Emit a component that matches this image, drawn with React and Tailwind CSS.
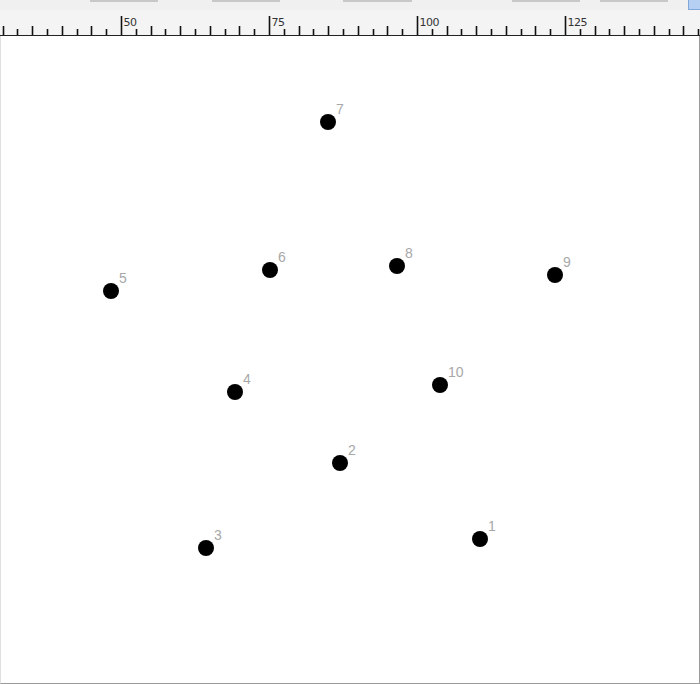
import React from "react";

const points = [
  { n: 7, x: 327, y: 122 },
  { n: 6, x: 269, y: 270 },
  { n: 5, x: 110, y: 291 },
  { n: 8, x: 396, y: 266 },
  { n: 9, x: 554, y: 275 },
  { n: 4, x: 234, y: 392 },
  { n: 10, x: 439, y: 385 },
  { n: 2, x: 339, y: 463 },
  { n: 3, x: 205, y: 548 },
  { n: 1, x: 479, y: 539 },
];

const tabs = [
  [90, 158],
  [212, 280],
  [343, 412],
  [512, 580],
  [600, 668],
];

function Ruler() {
  const ticks = [];
  for (let k = 0; k <= 47; k++) {
    const x = Math.round(2.6 + 14.8 * k) + 0.5;
    const unit = 30 + 2.5 * k;
    let top = 19;
    if (unit % 25 === 0) top = 6;
    else if (unit % 5 === 0) top = 16;
    ticks.push(
      <g key={k}>
        <line x1={x} x2={x} y1={top} y2={25} stroke="#111" strokeWidth="1.6" />
        {unit % 25 === 0 && (
          <text x={x + 2} y={16} fontSize="11" fill="#333" fontFamily="'DejaVu Sans', sans-serif" letterSpacing="-0.5">
            {unit}
          </text>
        )}
      </g>
    );
  }
  return (
    <svg width="700" height="26" className="block">
      {ticks}
      <line x1="0" x2="700" y1="25.5" y2="25.5" stroke="#222" strokeWidth="1" />
    </svg>
  );
}

export default function App() {
  return (
    <div className="w-[700px] h-[684px] flex flex-col bg-white overflow-hidden" style={{ fontFamily: "'Liberation Sans', sans-serif" }}>
      <div className="relative h-[10px] bg-[#f0f0f0]">
        {tabs.map(([a, b]) => (
          <div
            key={a}
            className="absolute top-0 h-[2px] bg-[#c8c8c8]"
            style={{ left: a, width: b - a }}
          />
        ))}
        <div className="absolute right-0 top-0 w-[12px] h-[10px] bg-[#b5d0f2] border-l border-b border-[#7fa7d9]" />
      </div>
      <div className="h-[26px] bg-[#f4f4f4]">
        <Ruler />
      </div>
      <div className="relative flex-1 border-r border-b border-l border-r-[#9a9a9a] border-b-[#9a9a9a] border-l-[#e0e0e0]">
        {points.map((p) => (
          <React.Fragment key={p.n}>
            <div
              className="absolute w-[16px] h-[16px] rounded-full bg-black"
              style={{ left: p.x - 8, top: p.y - 36 - 8 }}
            />
            <span
              className="absolute text-[14px] leading-none text-[#a8a8a8]"
              style={{ left: p.x + 8, top: p.y - 36 - 20 }}
            >
              {p.n}
            </span>
          </React.Fragment>
        ))}
      </div>
    </div>
  );
}
